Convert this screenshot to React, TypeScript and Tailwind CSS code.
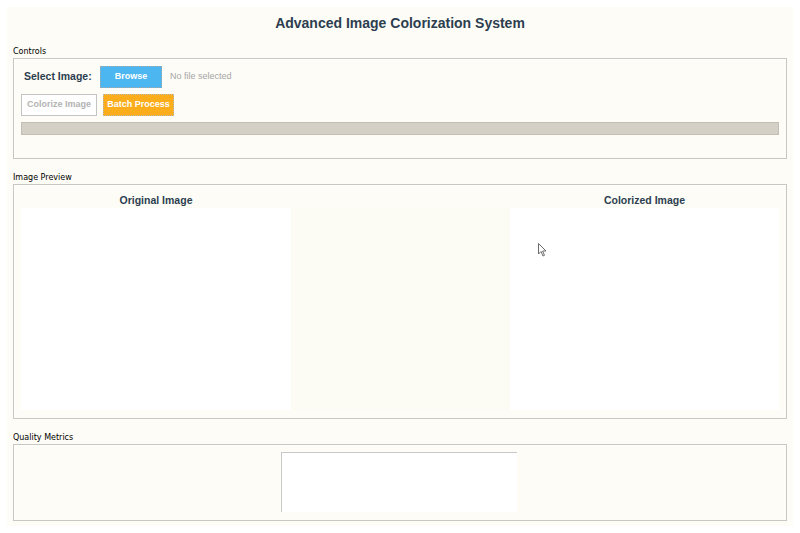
import React from 'react';

const font = { fontFamily: '"Liberation Sans", Arial, sans-serif' };
const smallFont = { fontFamily: '"DejaVu Sans", "Liberation Sans", sans-serif' };

/**
 * Section label sitting above a grooved frame
 */
function FrameLabel({ text, tall }: { text: string; tall?: boolean }) {
  return (
    <div
      className={`${tall ? 'h-[25px]' : 'h-[18px]'} pl-[6px] flex items-end text-[8px] text-black leading-none pb-[2px]`}
      style={smallFont}
    >
      {text}
    </div>
  );
}

export default function App() {
  return (
    <div className="w-[800px] h-[533px] bg-white p-[7px] relative" style={font}>
      <div className="w-[786px] h-[519px] bg-[#fdfcf6] flex flex-col">
        {/* Title */}
        <div className="h-[33px] pt-[7px] text-center text-[14px] font-bold text-[#2c3e50] leading-[18px]">
          Advanced Image Colorization System
        </div>

        <FrameLabel text="Controls" />
        <div className="ml-[6px] w-[774px] h-[101px] border border-[#c9c8c0] shadow-[inset_1px_1px_0_#ffffff] px-[7px] pt-[7px]">
          <div className="flex items-center h-[22px]">
            <span className="ml-[3px] w-[76px] text-[10.5px] font-bold text-[#2c3e50]">Select Image:</span>
            <button className="w-[62px] h-[22px] bg-[#4cb6f1] border border-dotted border-[#a8a8a8] text-white text-[9px] font-bold">
              Browse
            </button>
            <span className="ml-[8px] text-[9px] text-[#a6a6a6]">No file selected</span>
          </div>
          <div className="flex items-center gap-[6px] mt-[5px] h-[23px]">
            <button className="w-[76px] h-[22px] bg-white border border-[#c4c4c4] text-[#b3b3b3] text-[9px] font-bold">
              Colorize Image
            </button>
            <button className="w-[71px] h-[22px] bg-[#fbad1c] border border-dotted border-[#b9b9b9] text-white text-[9px] font-bold">
              Batch Process
            </button>
          </div>
          <div className="mt-[6px] h-[13px] bg-[#d4d0c6] border border-[#c3bfb5]" />
        </div>

        <FrameLabel text="Image Preview" tall />
        <div className="ml-[6px] w-[774px] h-[235px] border border-[#c9c8c0] shadow-[inset_1px_1px_0_#ffffff] px-[7px] pt-[7px] flex">
          <div className="w-[270px] flex flex-col">
            <div className="h-[16px] text-center text-[10.5px] font-bold text-[#2c3e50] leading-[16px]">Original Image</div>
            <div className="h-[202px] bg-white" />
          </div>
          <div className="flex-1 flex flex-col">
            <div className="h-[16px]" />
            <div className="h-[202px] bg-[#fdfcf4]" />
          </div>
          <div className="w-[269px] flex flex-col">
            <div className="h-[16px] text-center text-[10.5px] font-bold text-[#2c3e50] leading-[16px]">Colorized Image</div>
            <div className="h-[202px] bg-white" />
          </div>
        </div>

        <FrameLabel text="Quality Metrics" tall />
        <div className="ml-[6px] w-[774px] h-[77px] border border-[#c9c8c0] shadow-[inset_1px_1px_0_#ffffff] pt-[7px] flex justify-center">
          <div className="w-[236px] h-[60px] bg-white border-l border-t border-[#c8c8c8] -ml-[2px]" />
        </div>
      </div>

      {/* Mouse pointer */}
      <svg className="absolute left-[538px] top-[243px]" width="9" height="14" viewBox="0 0 9 14">
        <path d="M0.5 0.5 L0.5 11 L3 8.5 L5 13 L6.5 12.3 L4.6 8 L8 8 Z" fill="#ffffff" stroke="#6b6b6b" strokeWidth="1" />
      </svg>
    </div>
  );
}
